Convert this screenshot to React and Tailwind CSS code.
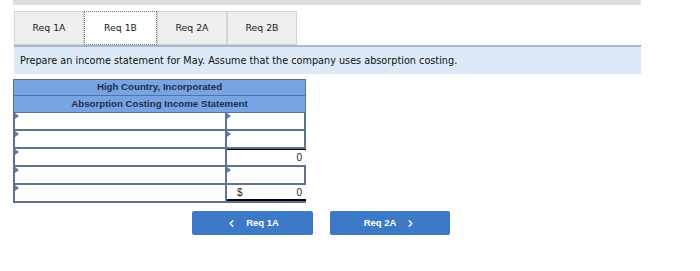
import { ChevronLeft, ChevronRight } from "lucide-react";

const tabs = ["Req 1A", "Req 1B", "Req 2A", "Req 2B"];

const rows = [
  { right: "", marker: true },
  { right: "", marker: true },
  { right: "0", marker: false, topBlack: true },
  { right: "", marker: true },
  { right: "0", dollar: true, marker: false, bottomBlack: true },
];

function Marker() {
  return (
    <span className="absolute left-0 top-0 w-0 h-0 border-t-[3px] border-b-[3px] border-l-[4px] border-t-transparent border-b-transparent border-l-[#4f7fc0]" />
  );
}

export default function App() {
  return (
    <div className="w-[700px] h-[271px] bg-white font-['DejaVu_Sans',sans-serif] text-[#222]">
      <div className="ml-[13px] w-[628px] h-[5px] bg-[#dedede]" />

      <div className="ml-[14px] mt-[6px] flex h-[34px]">
        {tabs.map((tab) => (
          <div
            key={tab}
            className={
              tab === "Req 1B"
                ? "w-[73px] flex items-center justify-center bg-white border border-dotted border-[#5c6f9a] text-[9.3px]"
                : "w-[70px] flex items-center justify-center bg-[#efefef] border border-[#d4d4d4] text-[9.3px]"
            }
          >
            {tab}
          </div>
        ))}
      </div>

      <div className="ml-[14px] w-[627px] h-[29px] border-t-2 border-[#aab6c2] bg-[#dde9f7] flex items-center pl-[6px] pt-[1px] text-[9.7px] text-[#111]">
        Prepare an income statement for May. Assume that the company uses absorption costing.
      </div>

      <div className="ml-[13px] mt-[5px] w-[293px] font-['Liberation_Sans',sans-serif]">
        <div className="h-[17px] bg-[#78a4e4] border border-[#55729c] flex items-center justify-center text-[9.7px] font-bold text-[#1d2e4a]">
          High Country, Incorporated
        </div>
        <div className="h-[17px] bg-[#78a4e4] border-x border-b border-[#55729c] flex items-center justify-center text-[9.7px] font-bold text-[#1d2e4a]">
          Absorption Costing Income Statement
        </div>
        <div className="border-l-2 border-[#5f7391]">
          {rows.map((row, i) => (
            <div key={i} className="flex h-[18px] border-b-2 border-[#5f7391]">
              <div className="relative w-[212px] border-r-2 border-[#5f7391] bg-white">
                <Marker />
              </div>
              <div
                className={
                  "relative flex-1 bg-white flex items-center justify-between px-[4px] text-[10px] " +
                  (row.topBlack ? "border-t border-black " : "") +
                  (row.bottomBlack ? "border-b-2 border-black " : "") +
                  (i === 2 || i === 4 ? "" : "border-r-2 border-[#5f7391]")
                }
              >
                {row.marker && <Marker />}
                <span className="ml-[6px]">{row.dollar ? "$" : ""}</span>
                <span>{row.right}</span>
              </div>
            </div>
          ))}
        </div>
      </div>

      <div className="flex ml-[192px] mt-[8px] gap-[17px] font-['Liberation_Sans',sans-serif]">
        <button className="w-[121px] h-[24px] bg-[#3c79c6] rounded-[2px] text-white text-[9.5px] font-bold flex items-center justify-center gap-[9px]">
          <ChevronLeft size={11} strokeWidth={3} />
          Req 1A
        </button>
        <button className="w-[120px] h-[24px] bg-[#3c79c6] rounded-[2px] text-white text-[9.5px] font-bold flex items-center justify-center gap-[9px]">
          Req 2A
          <ChevronRight size={11} strokeWidth={3} />
        </button>
      </div>
    </div>
  );
}
